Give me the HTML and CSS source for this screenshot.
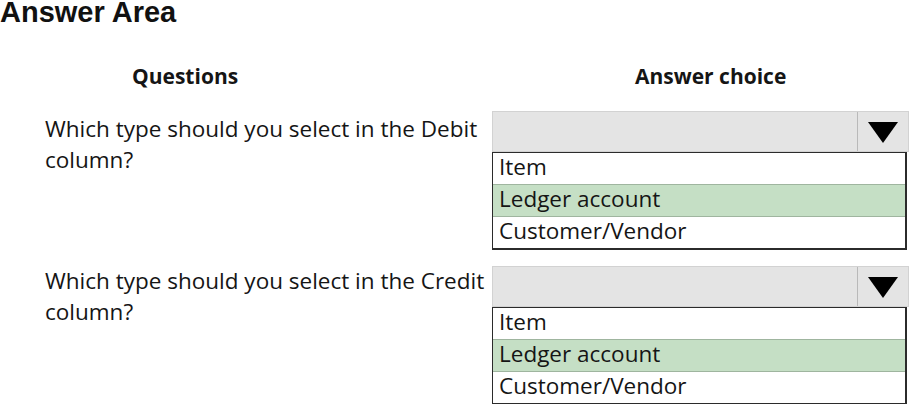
FILE: index.html
```html
<!DOCTYPE html>
<html lang="en">
<head>
<meta charset="utf-8">
<title>Answer Area</title>
<link rel="stylesheet" href="styles.css">
</head>
<body>
<div class="page">
  <h1 class="title">Answer Area</h1>
  <div class="heads">
    <div class="head head-q">Questions</div>
    <div class="head head-a">Answer choice</div>
  </div>
  <div class="row row-first">
    <div class="question">Which type should you select in the Debit<br>column?</div>
    <div class="dropdown">
      <div class="select">
        <div class="select-value"></div>
        <div class="select-btn"><span class="arrow"></span></div>
      </div>
      <ul class="options">
        <li class="option">Item</li>
        <li class="option selected">Ledger account</li>
        <li class="option">Customer/Vendor</li>
      </ul>
    </div>
  </div>
  <div class="row row-second">
    <div class="question">Which type should you select in the Credit<br>column?</div>
    <div class="dropdown">
      <div class="select">
        <div class="select-value"></div>
        <div class="select-btn"><span class="arrow"></span></div>
      </div>
      <ul class="options">
        <li class="option">Item</li>
        <li class="option selected">Ledger account</li>
        <li class="option">Customer/Vendor</li>
      </ul>
    </div>
  </div>
</div>
</body>
</html>
```

FILE: styles.css
```css
html, body {
  margin: 0;
  padding: 0;
  background: #ffffff;
}

body {
  width: 909px;
  height: 404px;
  overflow: hidden;
  color: #151515;
  font-family: "Open Sans", "Noto Sans", sans-serif;
}

.page {
  display: flex;
  flex-direction: column;
}

.title {
  margin: 0;
  font-family: "Liberation Sans", Arial, sans-serif;
  font-weight: 700;
  font-size: 29px;
  line-height: 24px;
  color: #111;
}

.heads {
  display: grid;
  grid-template-columns: 492px 1fr;
  margin-top: 40px;
}

.head {
  font-size: 21px;
  font-weight: 700;
  line-height: 24px;
  white-space: nowrap;
}

.head-q {
  padding-left: 132px;
}

.head-a {
  padding-left: 143px;
}

.row {
  display: grid;
  grid-template-columns: 492px 417px;
  align-items: start;
}

.row-first {
  margin-top: 23px;
}

.row-second {
  margin-top: 16px;
}

.question {
  padding: 2px 0 0 45px;
  font-size: 22.5px;
  line-height: 31px;
  white-space: nowrap;
}

.row-second .question {
  padding-top: 0;
  margin-top: -1px;
}

.dropdown {
  display: flex;
  flex-direction: column;
}

.select {
  display: flex;
  height: 41px;
  box-sizing: border-box;
  background: #e4e4e4;
  border: 1px solid #d2d2d2;
}

.select-value {
  flex: 1;
  border-right: 1px solid #b9b9b9;
}

.select-btn {
  width: 50px;
  display: flex;
  align-items: center;
  justify-content: center;
}

.arrow {
  width: 0;
  height: 0;
  border-left: 15px solid transparent;
  border-right: 15px solid transparent;
  border-top: 21px solid #000;
  margin-top: 1px;
}

.options {
  list-style: none;
  margin: 0;
  padding: 0;
  width: 415px;
  box-sizing: border-box;
  border: 2px solid #2b2b2b;
  border-width: 1px 2px 2px 1px;
}

.option {
  height: 31px;
  padding-left: 6px;
  font-size: 22.5px;
  line-height: 28px;
  white-space: nowrap;
}

.option + .option {
  border-top: 1px solid #9fb59f;
}

.option.selected {
  background: #c5dfc5;
}
```
